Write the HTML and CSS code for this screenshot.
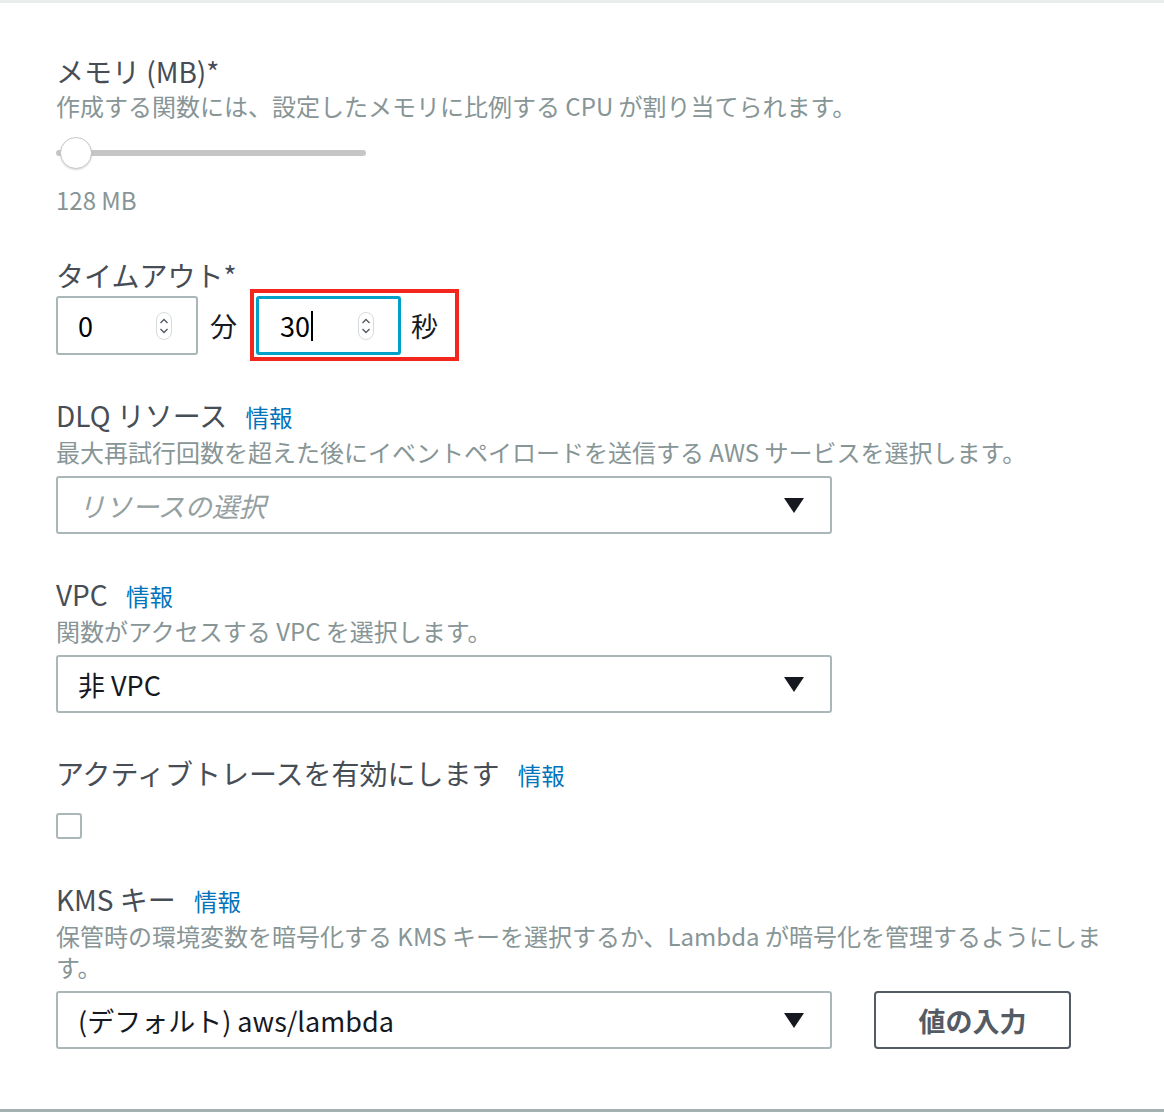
FILE: index.html
```html
<!DOCTYPE html>
<html lang="ja">
<head>
    <meta charset="UTF-8">
    <meta name="viewport" content="width=device-width, initial-scale=1.0">
    <title>基本設定</title>
    <link rel="stylesheet" href="styles.css">
</head>
<body>
    <div class="panel">
        <!-- メモリ -->
        <div class="field">
            <div class="label">メモリ (MB)*</div>
            <div class="desc">作成する関数には、設定したメモリに比例する CPU が割り当てられます。</div>
            <div class="slider">
                <div class="track"></div>
                <div class="thumb"></div>
            </div>
            <div class="slider-value">128 MB</div>
        </div>

        <!-- タイムアウト -->
        <div class="field">
            <div class="label">タイムアウト*</div>
            <div class="timeout">
                <div class="num">
                    <span>0</span>
                    <svg class="spin" width="16" height="28" viewBox="0 0 16 28">
                        <rect x="0.5" y="0.5" width="15" height="27" rx="7.5" fill="#fff" stroke="#d5dbdb"/>
                        <path d="M4.5 11 L8 7.5 L11.5 11" fill="none" stroke="#545b64" stroke-width="1.4"/>
                        <path d="M4.5 17 L8 20.5 L11.5 17" fill="none" stroke="#545b64" stroke-width="1.4"/>
                    </svg>
                </div>
                <span class="unit">分</span>
                <div class="highlight">
                    <div class="num focused">
                        <span class="typed">30</span>
                        <svg class="spin" width="16" height="28" viewBox="0 0 16 28">
                            <rect x="0.5" y="0.5" width="15" height="27" rx="7.5" fill="#fff" stroke="#d5dbdb"/>
                            <path d="M4.5 11 L8 7.5 L11.5 11" fill="none" stroke="#545b64" stroke-width="1.4"/>
                            <path d="M4.5 17 L8 20.5 L11.5 17" fill="none" stroke="#545b64" stroke-width="1.4"/>
                        </svg>
                    </div>
                    <span class="unit">秒</span>
                </div>
            </div>
        </div>

        <!-- DLQ -->
        <div class="field">
            <div class="label">DLQ リソース <a class="info" href="#">情報</a></div>
            <div class="desc">最大再試行回数を超えた後にイベントペイロードを送信する AWS サービスを選択します。</div>
            <div class="select">
                <span class="placeholder">リソースの選択</span>
                <span class="caret"></span>
            </div>
        </div>

        <!-- VPC -->
        <div class="field">
            <div class="label">VPC <a class="info" href="#">情報</a></div>
            <div class="desc">関数がアクセスする VPC を選択します。</div>
            <div class="select">
                <span>非 VPC</span>
                <span class="caret"></span>
            </div>
        </div>

        <!-- トレース -->
        <div class="field">
            <div class="label">アクティブトレースを有効にします <a class="info" href="#">情報</a></div>
            <div class="checkbox"></div>
        </div>

        <!-- KMS -->
        <div class="field last">
            <div class="label">KMS キー <a class="info" href="#">情報</a></div>
            <div class="desc">保管時の環境変数を暗号化する KMS キーを選択するか、Lambda が暗号化を管理するようにします。</div>
            <div class="kms-row">
                <div class="select">
                    <span>(デフォルト) aws/lambda</span>
                    <span class="caret"></span>
                </div>
                <button class="btn">値の入力</button>
            </div>
        </div>
    </div>
</body>
</html>
```

FILE: styles.css
```css
body {
    margin: 0;
    background: #ffffff;
    font-family: "Noto Sans CJK JP", "Noto Sans", sans-serif;
    color: #474d55;
}
.panel {
    box-sizing: border-box;
    height: 1112px;
    border-top: 3px solid #eaeded;
    border-bottom: 3px solid #a4b0b1;
    padding: 51px 48px 0 56px;
}
.field {
    margin-bottom: 43px;
}
.label {
    font-size: 28px;
    line-height: 35px;
}
.info {
    margin-left: 12px;
    font-size: 23.5px;
    color: #0073bb;
    text-decoration: none;
}
.desc {
    margin-top: 1px;
    font-size: 24px;
    line-height: 31px;
    color: #879596;
}

/* スライダー */
.slider {
    position: relative;
    width: 310px;
    height: 32px;
    margin-top: 16px;
}
.track {
    position: absolute;
    left: 0;
    right: 0;
    top: 13px;
    height: 6px;
    border-radius: 3px;
    background: #c6c6c6;
}
.thumb {
    position: absolute;
    left: 4px;
    top: 0;
    width: 30px;
    height: 30px;
    border-radius: 50%;
    background: #fff;
    border: 1px solid #c8c8c8;
    box-shadow: 0 1px 2px rgba(0, 0, 0, 0.15);
}
.slider-value {
    margin-top: 15px;
    font-size: 24px;
    line-height: 31px;
    color: #879596;
}

/* タイムアウト */
.timeout {
    display: flex;
    align-items: center;
    margin-top: 3px;
}
.num {
    box-sizing: border-box;
    display: flex;
    align-items: center;
    justify-content: space-between;
    width: 142px;
    height: 59px;
    padding: 0 24px 0 20px;
    border: 2px solid #aab7b8;
    border-radius: 3px;
    font-size: 27px;
    color: #000;
}
.num.focused {
    width: 145px;
    border: 3px solid #00a1c9;
    padding: 0 24px 0 21px;
}
.typed {
    border-right: 2px solid #000;
    line-height: 30px;
    padding-right: 1px;
}
.spin {
    display: block;
}
.unit {
    font-size: 27px;
    color: #16191f;
    margin: 0 12px;
}
.highlight {
    display: flex;
    align-items: center;
    margin: -7px 0 -6px 1px;
    padding: 3px 5px 2px 2px;
    border: 4px solid #f3261d;
}
.highlight .unit {
    margin: 0 12px 0 10px;
}

/* セレクト */
.select {
    box-sizing: border-box;
    display: flex;
    align-items: center;
    justify-content: space-between;
    width: 776px;
    height: 58px;
    margin-top: 9px;
    padding: 0 26px 0 20px;
    border: 2px solid #aab7b8;
    border-radius: 3px;
    font-size: 27px;
    color: #16191f;
}
.placeholder {
    font-style: italic;
    color: #95a0a1;
}
.caret {
    width: 0;
    height: 0;
    border-left: 10px solid transparent;
    border-right: 10px solid transparent;
    border-top: 15px solid #16191f;
}
.checkbox {
    box-sizing: border-box;
    width: 26px;
    height: 26px;
    margin-top: 20px;
    border: 2px solid #aab7b8;
    border-radius: 3px;
}

/* KMS */
.kms-row {
    display: flex;
    align-items: center;
    gap: 42px;
    margin-top: 9px;
}
.kms-row .select {
    margin-top: 0;
}
.btn {
    box-sizing: border-box;
    width: 197px;
    height: 58px;
    border: 2px solid #545b64;
    border-radius: 4px;
    background: #fff;
    font-family: inherit;
    font-size: 27px;
    font-weight: bold;
    color: #545b64;
    cursor: pointer;
}
```
